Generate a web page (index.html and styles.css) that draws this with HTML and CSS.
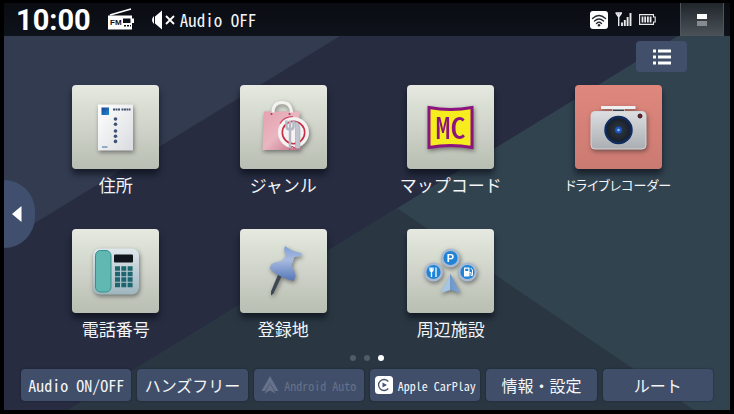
FILE: index.html
```html
<!DOCTYPE html>
<html lang="ja">
<head>
    <meta charset="UTF-8">
    <meta name="viewport" content="width=device-width, initial-scale=1.0">
    <link rel="stylesheet" href="styles.css">
    <title>ナビメニュー</title>
</head>
<body>
    <div class="screen">
        <header class="status-bar">
            <time class="clock">10:00</time>
            <svg class="radio" width="28" height="24" viewBox="0 0 28 24" aria-hidden="true">
                <path d="M3 7L24 1" stroke="#fff" stroke-width="1.6"/>
                <path fill="#fff" fill-rule="evenodd" d="M1 7.500H25V10.500H27V15H25V21.500H1ZM16 10.500V15H23.500V10.500Z"/>
                <path d="M17 17.700H19M20 17.700H22M23 17.700H24" stroke="#0d1017" stroke-width="1.6"/>
                <text x="3" y="17" class="radio-band">FM</text>
            </svg>
            <div class="audio-state">
                <svg width="24" height="20" viewBox="0 0 24 20" aria-hidden="true">
                    <path fill="#fff" d="M11 .5L4 6.500V13.500L11 19.500ZM3 6Q-1 10 3 14Z"/>
                    <path d="M15 6L23 14M23 6L15 14" stroke="#fff" stroke-width="1.8"/>
                </svg>
                <span>Audio OFF</span>
            </div>
            <div class="signals">
                <svg width="18" height="18" viewBox="0 0 18 18" aria-hidden="true">
                    <rect width="18" height="18" rx="3" fill="#fff"/>
                    <g fill="none" stroke="#252a31" stroke-width="1.4" stroke-linecap="round">
                        <path d="M2.500 7.500Q9 1.500 15.500 7.500M4.500 10Q9 6 13.500 10M6.500 12.500Q9 10 11.500 12.500"/>
                    </g>
                    <circle cx="9" cy="14.300" r="1.300" fill="#252a31"/>
                </svg>
                <svg width="17" height="15" viewBox="0 0 17 15" aria-hidden="true">
                    <g fill="none" stroke="#e8eaec">
                        <path d="M.5 1H7M1 1L3.700 5L6.500 1M3.700 1V14" stroke-width="1.4"/>
                        <path d="M7 14V10.500M9.800 14V8M12.600 14V5M15.500 14V1" stroke-width="1.9"/>
                    </g>
                </svg>
                <svg width="17" height="11" viewBox="0 0 17 11" aria-hidden="true">
                    <path d="M.6.6H14.500V3H16.200V8H14.500V10.400H.6Z" fill="none" stroke="#e8eaec" stroke-width="1.1"/>
                    <path d="M3.500 2.500V8.500M6.200 2.500V8.500M8.900 2.500V8.500M11.600 2.500V8.500" stroke="#e8eaec" stroke-width="1.8"/>
                </svg>
            </div>
            <button class="split-button" aria-label="画面切替">
                <span></span>
                <span></span>
            </button>
        </header>

        <main class="home">
            <svg class="backdrop" viewBox="0 0 726 374" preserveAspectRatio="none" aria-hidden="true">
                <path fill="#323b50" d="M0 0H336L0 206Z"/>
                <path fill="#324350" d="M674 0H726V374H64Z"/>
                <path fill="#2a3743" d="M393 172L690 374H64Z"/>
            </svg>

            <button class="page-back" aria-label="前のページ">
                <svg width="10" height="16" viewBox="0 0 10 16" aria-hidden="true"><path d="M9.500 0V16L0 8Z" fill="#fff"/></svg>
            </button>

            <div class="toolbar">
                <button class="list-button" aria-label="リスト表示">
                    <svg width="18" height="16" viewBox="0 0 18 16" aria-hidden="true">
                        <path d="M0 2H3M5 2H18M0 8H3M5 8H18M0 14H3M5 14H18" stroke="#fff" stroke-width="3"/>
                    </svg>
                </button>
            </div>

            <nav class="menu">
                <button class="item">
                    <svg class="tile" viewBox="0 0 87 83" aria-hidden="true">
                        <defs>
                            <linearGradient id="paper" x2="1" y2="1"><stop stop-color="#fff"/><stop offset="1" stop-color="#d9dce0"/></linearGradient>
                            <linearGradient id="stamp" x2="1" y2="1"><stop stop-color="#1f3f96"/><stop offset="1" stop-color="#1d8fcb"/></linearGradient>
                        </defs>
                        <g class="art">
                            <rect x="26" y="19" width="35" height="46" fill="url(#paper)"/>
                            <rect x="29.500" y="22" width="7.500" height="7.500" fill="url(#stamp)"/>
                            <path d="M41 24H48M49.500 24H58.500" stroke="#41506e" stroke-width="2.200" stroke-dasharray="2 .5"/>
                            <g fill="#3f5273">
                                <circle cx="43.500" cy="33.500" r="1.800"/><circle cx="43.500" cy="38.700" r="1.800"/>
                                <circle cx="43.500" cy="45.500" r="1.800"/><circle cx="43.500" cy="50.700" r="1.800"/><circle cx="43.500" cy="55.900" r="1.800"/>
                            </g>
                            <path d="M30 61.500H35.500" stroke="#3a6a9a"/>
                        </g>
                    </svg>
                    <span class="label">住所</span>
                </button>

                <button class="item">
                    <svg class="tile" viewBox="0 0 87 83" aria-hidden="true">
                        <defs>
                            <linearGradient id="bag" x2="1" y2="1"><stop stop-color="#e5a1ae"/><stop offset=".5" stop-color="#e9b6c0"/><stop offset="1" stop-color="#bf6f85"/></linearGradient>
                        </defs>
                        <g class="art">
                            <path d="M24 26H59.500L60.500 64.500H22.500Z" fill="url(#bag)"/>
                            <path d="M33 27Q33 17 42 17T51.500 27" fill="none" stroke="#f4f2ef" stroke-width="3"/>
                            <circle cx="31.500" cy="28.500" r="1" fill="#a13a51"/><circle cx="49.500" cy="28.500" r="1" fill="#a13a51"/>
                            <circle cx="53.500" cy="47" r="15.500" fill="#f4f2f2"/>
                            <circle cx="53.500" cy="47" r="11.200" fill="none" stroke="#c72e46" stroke-width="1.600"/>
                            <path d="M40 38Q44 31 53 31M49 64L52 61L56 63L60 61" fill="none" stroke="#c9415a" stroke-width="1.200"/>
                            <path d="M46.500 35V41Q46.500 44 50 44T53.500 41V35M50 35V63" fill="none" stroke="#b3b8c2" stroke-width="2.400"/>
                            <path d="M55.500 63V36Q60 37 60 45V63Z" fill="#bfc4cd" stroke="#969ca8" stroke-width=".5"/>
                        </g>
                    </svg>
                    <span class="label">ジャンル</span>
                </button>

                <button class="item">
                    <svg class="tile" viewBox="0 0 87 83" aria-hidden="true">
                        <g class="art">
                            <path d="M22 22Q43.500 26 65 22V62Q43.500 58 22 62Z" fill="#f5ed1e" stroke="#8c147e" stroke-width="3"/>
                            <text x="43.500" y="53" text-anchor="middle" class="mapcode-mark">MC</text>
                        </g>
                    </svg>
                    <span class="label">マップコード</span>
                </button>

                <button class="item">
                    <svg class="tile tile-coral" viewBox="0 0 87 83" aria-hidden="true">
                        <defs>
                            <linearGradient id="metal" x2="0" y2="1"><stop stop-color="#dcdee0"/><stop offset="1" stop-color="#aaaeb2"/></linearGradient>
                            <radialGradient id="lens"><stop stop-color="#2f6fd0"/><stop offset=".25" stop-color="#112b60"/><stop offset=".35" stop-color="#28303a"/><stop offset="1" stop-color="#171d28"/></radialGradient>
                        </defs>
                        <g class="art">
                            <path d="M26 20.500H60.500V23.500H49.500V26H37.500V23.500H26Z" fill="#eef0f1"/>
                            <rect x="38" y="24" width="11" height="2.500" fill="#333b45"/>
                            <rect x="16" y="26" width="55" height="37.500" rx="4" fill="url(#metal)" stroke="#d5d7d9"/>
                            <circle cx="43.500" cy="44.500" r="13" fill="url(#lens)" stroke="#102c5e" stroke-width="2.500"/>
                            <circle cx="43.500" cy="44.500" r="3.500" fill="#1d55b3"/>
                            <circle cx="43.500" cy="44.500" r="1.300" fill="#88baff"/>
                            <circle cx="65" cy="30.500" r="2" fill="#7b1723" stroke="#2c2025"/>
                        </g>
                    </svg>
                    <span class="label label-long">ドライブレコーダー</span>
                </button>

                <button class="item">
                    <svg class="tile" viewBox="0 0 87 83" aria-hidden="true">
                        <defs>
                            <linearGradient id="phone" x2="0" y2="1"><stop stop-color="#dfe7ec"/><stop offset="1" stop-color="#9fb6bf"/></linearGradient>
                        </defs>
                        <g class="art">
                            <rect x="21" y="19" width="46" height="46" rx="7" fill="url(#phone)"/>
                            <rect x="23.500" y="21" width="15.500" height="41.500" rx="5" fill="#61b8b2" stroke="#35918e"/>
                            <rect x="42" y="25" width="19" height="8" rx="1" fill="#10161c"/>
                            <path d="M43 39H60.600M43 44.500H60.600M43 50H60.600M43 55.500H60.600" stroke="#1d6670" stroke-width="4.500" stroke-dasharray="5 1.300"/>
                        </g>
                    </svg>
                    <span class="label">電話番号</span>
                </button>

                <button class="item">
                    <svg class="tile" viewBox="0 0 87 83" aria-hidden="true">
                        <defs>
                            <linearGradient id="pin" x2="0" y2="1"><stop stop-color="#7f9fd6"/><stop offset=".4" stop-color="#a9bbdf"/><stop offset="1" stop-color="#5276b8"/></linearGradient>
                        </defs>
                        <g class="art">
                            <path d="M38.500 44L42 46L33.500 64L31 66V62Z" fill="#3d4753"/>
                            <path d="M45 16.500Q52 22 61 23.500Q62 26 59.500 27L54.500 27.500L51.500 36.500Q54 39 55.500 46.500L53.500 51.500Q39 48 29.500 39L31.500 34.500Q36 31.500 40.500 32L46.500 26.500L44 20Z" fill="url(#pin)"/>
                        </g>
                    </svg>
                    <span class="label">登録地</span>
                </button>

                <button class="item">
                    <svg class="tile" viewBox="0 0 87 83" aria-hidden="true">
                        <defs>
                            <linearGradient id="arrow"><stop stop-color="#a5c5e5"/><stop offset=".5" stop-color="#a5c5e5"/><stop offset=".5" stop-color="#6f97c8"/><stop offset="1" stop-color="#7ea5d2"/></linearGradient>
                        </defs>
                        <g class="art">
                            <g fill="#1f84d6" stroke="#a9b9d2" stroke-width="2.400">
                                <circle cx="43.500" cy="28.500" r="8.300"/><circle cx="26.500" cy="42.500" r="8.300"/><circle cx="60.500" cy="42.500" r="8.300"/>
                            </g>
                            <text x="43.500" y="32.500" text-anchor="middle" class="parking-mark">P</text>
                            <path d="M23 38V40.500Q23 42 24.500 42T26 40.500V38M24.500 38V47.500M29 38V47.500" fill="none" stroke="#fff" stroke-width="1.300"/>
                            <path fill="#fff" fill-rule="evenodd" d="M57 38H62.500V47H57ZM58.200 39.200V41.500H61.300V39.200Z"/>
                            <path d="M62.500 43H64V46H65.500V40.500L63.800 38.500" fill="none" stroke="#fff"/>
                            <path d="M43.500 44.500L53.500 63.500L43.500 60.500L33.500 63.500Z" fill="url(#arrow)"/>
                        </g>
                    </svg>
                    <span class="label">周辺施設</span>
                </button>
            </nav>

            <div class="pager">
                <span></span>
                <span></span>
                <span class="current"></span>
            </div>

            <nav class="shortcuts">
                <button>Audio ON/OFF</button>
                <button>ハンズフリー</button>
                <button class="compact" disabled>
                    <svg width="18" height="18" viewBox="0 0 18 18" aria-hidden="true">
                        <path d="M9 0L17.500 15H14L9 7L4 15H.5Z" fill="currentColor"/>
                        <path d="M9 7.500L14.500 17.500L9 14.500L3.500 17.500Z" fill="currentColor"/>
                    </svg>
                    Android Auto
                </button>
                <button class="compact">
                    <svg width="18" height="18" viewBox="0 0 18 18" aria-hidden="true">
                        <rect width="18" height="18" rx="3.500" fill="#fff"/>
                        <path d="M13.300 5.500A5.500 5.500 0 1 0 13.300 12.500" fill="none" stroke="#46536d" stroke-width="1.300"/>
                        <path d="M7.500 6.500L12 9L7.500 11.500Z" fill="#46536d"/>
                    </svg>
                    Apple CarPlay
                </button>
                <button>情報・設定</button>
                <button>ルート</button>
            </nav>
        </main>
    </div>
</body>
</html>
```
FILE: styles.css
```css
* {
    box-sizing: border-box;
}

body {
    margin: 0;
    padding: 3px 4px 4px;
    min-height: 100vh;
    display: flex;
    background-color: #000;
    color: #f4f5f7;
    font-family: "Noto Sans CJK JP", sans-serif;
    font-feature-settings: "hwid";
}

button {
    display: flex;
    align-items: center;
    justify-content: center;
    margin: 0;
    padding: 0;
    border: none;
    background: none;
    color: inherit;
    font: inherit;
    font-feature-settings: inherit;
    white-space: nowrap;
    cursor: pointer;
}

svg {
    flex: none;
}

.screen {
    flex: 1;
    display: flex;
    flex-direction: column;
}

/* status bar */

.status-bar {
    height: 33px;
    display: flex;
    align-items: center;
    padding: 0 6px 0 12px;
    background: linear-gradient(#0a0c12, #0e121a);
}

.clock {
    font-family: Roboto, sans-serif;
    font-feature-settings: normal;
    font-size: 29px;
    font-weight: 700;
    line-height: 32px;
    color: #fff;
}

.radio {
    margin-left: 16px;
}

.radio-band {
    font-family: "Liberation Sans", sans-serif;
    font-feature-settings: normal;
    font-size: 8px;
    font-weight: 700;
    fill: #0d1017;
}

.audio-state {
    display: flex;
    align-items: center;
    gap: 5px;
    margin-left: 16px;
    font-size: 17px;
    line-height: 32px;
}

.signals {
    display: flex;
    align-items: center;
    gap: 7px;
    margin-left: auto;
    margin-right: 24px;
}

.split-button {
    align-self: stretch;
    width: 44px;
    flex-direction: column;
    gap: 2px;
    border: solid #4f555c;
    border-width: 0 1px;
    background: linear-gradient(#20252b, #4b5359);
}

.split-button span {
    width: 10px;
    height: 5px;
    background-color: #fff;
}

.split-button span + span {
    background-color: #878b90;
}

/* home menu */

.home {
    position: relative;
    flex: 1;
    display: flex;
    flex-direction: column;
    padding: 5px 0 9px;
    background-color: #272c41;
    overflow: hidden;
}

.backdrop {
    position: absolute;
    inset: 0;
    width: 100%;
    height: 100%;
}

.toolbar,
.menu,
.pager,
.shortcuts {
    position: relative;
}

.page-back {
    position: absolute;
    z-index: 1;
    left: 0;
    top: 144px;
    width: 31px;
    height: 68px;
    padding-right: 5px;
    border-radius: 0 34px 34px 0;
    background-color: #404f6d;
}

.toolbar {
    display: flex;
    justify-content: flex-end;
    padding-right: 43px;
}

.list-button {
    width: 51px;
    height: 31px;
    border-radius: 4px;
    background-color: #414f6b;
}

.menu {
    display: grid;
    grid-template-columns: repeat(4, 1fr);
    row-gap: 32px;
    padding: 13px 28px 0;
}

.item {
    flex-direction: column;
    gap: 4px;
}

.tile {
    width: 87px;
    height: 84px;
    border-radius: 4px;
    background: linear-gradient(#e5e9df, #b9beb3);
    box-shadow: 0 5px 6px rgba(5, 8, 16, 0.6);
}

.tile-coral {
    background: linear-gradient(#df877d, #cb7a72);
}

.art {
    filter: drop-shadow(1px 2px 2px rgba(30, 30, 30, 0.5));
}

.mapcode-mark {
    font-size: 30px;
    font-weight: 500;
    fill: #8c147e;
}

.parking-mark {
    font-family: "Liberation Sans", sans-serif;
    font-feature-settings: normal;
    font-size: 11px;
    font-weight: 700;
    fill: #fff;
}

.label {
    font-size: 17px;
    line-height: 24px;
}

.label-long {
    font-size: 13px;
    font-feature-settings: "palt";
}

.pager {
    display: flex;
    justify-content: center;
    gap: 8px;
    margin-top: auto;
}

.pager span {
    width: 6px;
    height: 6px;
    border-radius: 50%;
    background-color: #505c68;
}

.pager .current {
    background-color: #fff;
}

.shortcuts {
    display: grid;
    grid-template-columns: repeat(6, 1fr);
    gap: 6px;
    padding: 8px 17px 0;
}

.shortcuts button {
    height: 32px;
    border-radius: 4px;
    background-color: #404e69;
    box-shadow: 0 0 2px rgba(10, 15, 28, 0.6);
    font-size: 16px;
}

.shortcuts .compact {
    gap: 5px;
    font-size: 12px;
}

.shortcuts button:disabled {
    color: #66718a;
    cursor: default;
}
```
